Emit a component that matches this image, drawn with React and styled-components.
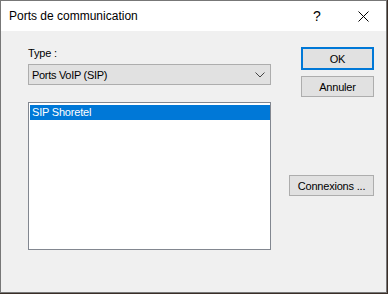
import React from "react";
import styled, { createGlobalStyle } from "styled-components";

const Global = createGlobalStyle`
  html, body { margin: 0; padding: 0; background: #3a2e27; }
  * { box-sizing: border-box; }
  #root { width: 388px; height: 294px; }
`;

const Window = styled.div`
  width: 387px;
  height: 293px;
  border: 1px solid #777777;
  background: #f0f0f0;
  display: flex;
  flex-direction: column;
  font-family: "Liberation Sans", Arial, sans-serif;
  color: #000;
`;

const TitleBar = styled.div`
  height: 30px;
  background: #ffffff;
  display: flex;
  align-items: center;
  padding-left: 8px;
`;

const Title = styled.div`
  flex: 1;
  font-size: 12px;
  line-height: 16px;
  color: #000;
`;

const CaptionButton = styled.div`
  width: 46px;
  height: 30px;
  display: flex;
  align-items: center;
  justify-content: center;
  font-size: 14px;
  color: #000;
`;

const Body = styled.div`
  flex: 1;
  display: flex;
  padding: 16px 12px 0 27px;
`;

const LeftCol = styled.div`
  width: 243px;
  display: flex;
  flex-direction: column;
`;

const Label = styled.div`
  font-size: 11px;
  line-height: 13px;
  height: 13px;
  letter-spacing: -0.2px;
`;

const Combo = styled.div`
  margin-top: 4px;
  height: 21px;
  border: 1px solid #adadad;
  background: #e1e1e1;
  display: flex;
  align-items: center;
  justify-content: space-between;
  padding: 0 5px 0 3px;
  font-size: 11px;
  letter-spacing: -0.3px;
`;

const ListBox = styled.div`
  margin-top: 17px;
  height: 148px;
  border: 1px solid #828790;
  background: #ffffff;
  padding: 2px 0 0 1px;
`;

const ListItem = styled.div`
  height: 15px;
  line-height: 15px;
  padding-left: 2px;
  font-size: 11px;
  letter-spacing: -0.2px;
  background: ${(p) => (p.$selected ? "#0078d7" : "transparent")};
  color: ${(p) => (p.$selected ? "#ffffff" : "#000")};
`;

const RightCol = styled.div`
  flex: 1;
  display: flex;
  flex-direction: column;
  align-items: flex-end;
`;

const Button = styled.div`
  width: ${(p) => p.$width}px;
  height: ${(p) => (p.$default ? 23 : 21)}px;
  margin-top: ${(p) => p.$mt || 0}px;
  border: ${(p) => (p.$default ? "2px solid #0078d7" : "1px solid #adadad")};
  background: #e1e1e1;
  display: flex;
  align-items: center;
  justify-content: center;
  font-size: 11px;
  letter-spacing: -0.2px;
`;

export default function App() {
  return (
    <>
      <Global />
      <Window>
        <TitleBar>
          <Title>Ports de communication</Title>
          <CaptionButton>?</CaptionButton>
          <CaptionButton>
            <svg width="11" height="11" viewBox="0 0 11 11">
              <path d="M0.5 0.5 L10.5 10.5 M10.5 0.5 L0.5 10.5" stroke="#000" strokeWidth="1" fill="none" />
            </svg>
          </CaptionButton>
        </TitleBar>
        <Body>
          <LeftCol>
            <Label>Type :</Label>
            <Combo>
              <span>Ports VoIP (SIP)</span>
              <svg width="10" height="6" viewBox="0 0 10 6">
                <path d="M0.5 0.5 L5 5 L9.5 0.5" stroke="#444" strokeWidth="1" fill="none" />
              </svg>
            </Combo>
            <ListBox>
              <ListItem $selected>SIP Shoretel</ListItem>
            </ListBox>
          </LeftCol>
          <RightCol>
            <Button $width={73} $default>OK</Button>
            <Button $width={73} $mt={6}>Annuler</Button>
            <Button $width={85} $mt={78}>Connexions ...</Button>
          </RightCol>
        </Body>
      </Window>
    </>
  );
}
